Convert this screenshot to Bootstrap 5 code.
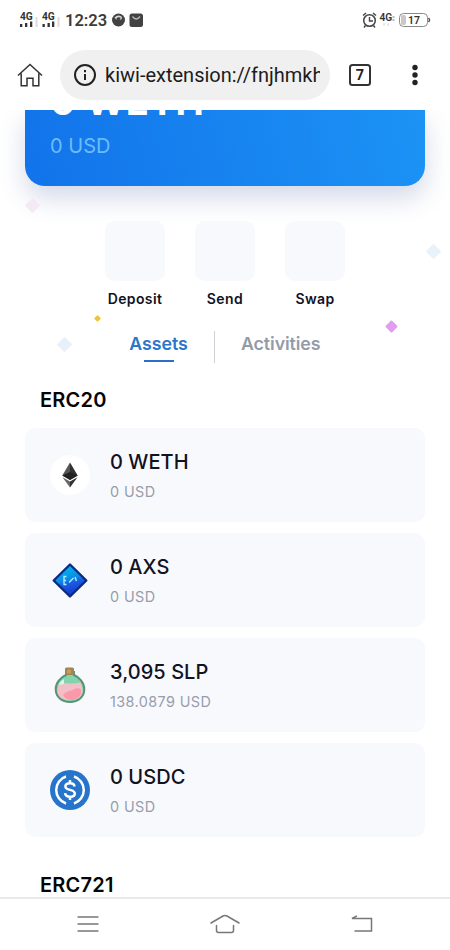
<!DOCTYPE html>
<html lang="en">
<head>
<meta charset="utf-8">
<meta name="viewport" content="width=device-width, initial-scale=1">
<title>Wallet</title>
<link href="https://cdn.jsdelivr.net/npm/bootstrap@5.3.0/dist/css/bootstrap.min.css" rel="stylesheet">
<style>
  body { height: 950px; font-family: Inter, "Liberation Sans", sans-serif; color: #11131f; background: #fff; }
  svg { display: block; flex: none; }
  .status-bar { height: 40px; padding: 0 19px 0 20px; font-family: Roboto, sans-serif; color: #3c3c3c; }
  .clock { font-size: 16.5px; line-height: 20px; font-weight: 600; letter-spacing: 0; padding-top: 1px; }
  .browser-bar { height: 70px; padding: 0 26px 0 15px; }
  .address { width: 270px; height: 50px; margin-left: 15px; padding: 0 10px 0 13px; background: #f0f0f0; font: 20px/50px Roboto, sans-serif; color: #1c1c1c; }
  .address-text { margin-left: 8px; }
  .page-view { height: 787px; padding: 0 25px; }
  .balance { height: 76px; padding-left: 25px; border-radius: 0 0 20px 20px; background: linear-gradient(75deg, #1273ea, #1c93f5); box-shadow: 0 12px 26px rgba(60, 80, 150, .22); }
  .balance-clip { height: 76px; }
  .balance-main { margin-top: -32px; font-size: 38px; line-height: 46px; font-weight: 700; letter-spacing: .6px; }
  .balance-sub { margin-top: 10px; font-size: 20px; line-height: 24px; color: #6cbcfb; }
  .actions { gap: 30px; margin-top: 35px; }
  .action { width: 60px; font-size: 14px; line-height: 20px; font-weight: 600; letter-spacing: .4px; }
  .action-tile { width: 60px; height: 60px; border-radius: 10px; background: #f8f9fd; margin-bottom: 8px; }
  .asset-tabs { height: 32px; margin-top: 22px; font-size: 17.8px; line-height: 25px; font-weight: 600; color: #939bab; letter-spacing: -.08px; }
  .tab-on { width: 85px; margin-left: 91px; color: #2b76cb; }
  .tab-line { width: 30px; height: 2px; margin-top: 4px; background: #2b6fc9; }
  .tab-off { margin-left: 26px; }
  .divider { width: 1px; height: 32px; margin-left: 13px; background: #cfd1d7; }
  .group-title { padding-left: 15px; font-size: 20px; line-height: 24px; font-weight: 600; color: #050505; letter-spacing: .2px; }
  .first-title { margin-top: 25px; }
  .asset { height: 94px; padding: 0 25px; border-radius: 10px; background: #f8f9fd; margin-bottom: 11px; }
  .asset-name { font-size: 20px; line-height: 26px; font-weight: 500; letter-spacing: .05px; }
  .asset-usd { margin-top: 7px; font-size: 14.4px; line-height: 20px; color: #989daa; letter-spacing: .4px; }
  .last-title { margin-top: 36px; }
  .confetti { width: 11px; height: 11px; transform: rotate(45deg); border-radius: 1px; position: absolute; }
  .c1 { left: 27px; top: 90px; background: #f4eaf6; }
  .c2 { left: 428px; top: 136px; background: #e8f2fa; }
  .c3 { left: 95px; top: 206px; width: 5px; height: 5px; background: #ecc53c; }
  .c4 { left: 387px; top: 212px; width: 9px; height: 9px; background: #e49cf0; }
  .c5 { left: 59px; top: 229px; background: #e8f1f9; }
  .system-nav { height: 53px; border-top: 2px solid #e9e9e9; background: #fff; padding: 0 77px 2px 77px; }
</style>
<script src="https://cdn.jsdelivr.net/npm/bootstrap@5.3.0/dist/js/bootstrap.bundle.min.js"></script>
</head>
<body class="d-flex flex-column overflow-hidden m-0">
<header>
  <div class="status-bar d-flex align-items-center justify-content-between">
    <div class="d-flex align-items-center">
      <svg width="45" height="20" viewBox="0 0 45 20" font-family="Roboto, sans-serif" font-size="10.2" font-weight="700" fill="#333">
        <text x="0" y="9.500">4G</text><text x="22" y="9.500">4G</text>
        <path d="M0 14h2.300v3H0zM5 13h2.300v4H5zM10 11.500h2.300v5.500H10zM22.500 14h2.300v3h-2.300zM27.500 13h2.300v4h-2.300zM32 11.500h2.300v5.500H32z"/>
        <path fill="#dcdcdc" d="M15.500 7h2v10h-2zM37.500 7h2v10h-2z"/>
      </svg>
      <span class="clock">12:23</span>
      <svg class="ms-1" width="33" height="16" viewBox="0 0 33 16">
        <circle cx="7.500" cy="8" r="6.500" fill="#424242"/><path d="M3.500 5.500Q7 2 10.500 4.500Q12 7.500 8.500 8Q11 5.500 8 5.300Q5 5 5.500 8" fill="#d9d9d9"/>
        <rect x="18.500" y="1.500" width="13.500" height="13.500" rx="2.500" fill="#424242"/><path d="M21.500 4.500Q25.200 9.500 29 4.500" fill="none" stroke="#bbb" stroke-width="1.300"/>
      </svg>
    </div>
    <svg width="70" height="20" viewBox="0 0 70 20" font-family="Roboto, sans-serif" fill="none" stroke="#444">
      <circle cx="8.500" cy="10.500" r="5.800" stroke-width="1.500"/><path d="M8.500 7v4h3.500M2 5.500 5 3M12 3l3 2.500M4.500 15.500 3 17.500M12.500 15.500l1.500 2" stroke-width="1.400"/>
      <text x="18.500" y="10.500" font-size="10.200" font-weight="600" fill="#333" stroke="none">4G</text>
      <path d="M31.500 7h2M31.500 10h2" stroke="#777"/><path d="M23 13v3M27 13v3M22 14h2M26 15h2" stroke="#ddd"/>
      <rect x="38.500" y="3.500" width="28" height="13" rx="4" stroke="#888"/><path d="M67.500 8q2 2 0 4" stroke="#555" stroke-width="1.500"/>
      <rect x="40" y="5" width="5" height="10" rx="2" fill="#c8c8c8" stroke="none"/>
      <text x="47" y="13.800" font-size="10.500" font-weight="600" fill="#333" stroke="none">17</text>
    </svg>
  </div>
  <div class="browser-bar d-flex align-items-center">
    <svg width="30" height="30" viewBox="0 0 30 30" fill="none" stroke="#333" stroke-width="1.500"><path d="M3 15.500 15 4.500 27 15.500M6.200 13.500V25.700H12V18.200h6v7.500h5.800V13.500"/></svg>
    <div class="address rounded-pill d-flex align-items-center">
      <svg width="24" height="24" viewBox="0 0 24 24"><circle cx="12" cy="12" r="10" fill="none" stroke="#222" stroke-width="2"/><path d="M11 11h2v6h-2zM11 7h2v2.200h-2z" fill="#222"/></svg>
      <span class="address-text text-nowrap overflow-hidden">kiwi-extension://fnjhmkh</span>
    </div>
    <svg class="ms-3" width="28" height="28" viewBox="0 0 28 28"><rect x="4" y="4" width="20" height="20" rx="2.500" fill="none" stroke="#333" stroke-width="2"/><text x="14" y="19.200" text-anchor="middle" font-family="Roboto, sans-serif" font-size="14.500" font-weight="700" fill="#222">7</text></svg>
    <svg class="ms-auto me-1" width="10" height="24" viewBox="0 0 10 24" fill="#222"><circle cx="5" cy="4.500" r="2.700"/><circle cx="5" cy="12" r="2.700"/><circle cx="5" cy="19.500" r="2.700"/></svg>
  </div>
</header>
<main class="page-view position-relative overflow-hidden">
  <section class="balance">
    <div class="balance-clip overflow-hidden">
      <div class="balance-main text-white">0 WETH</div>
      <div class="balance-sub">0 USD</div>
    </div>
  </section>
  <i class="confetti c1"></i><i class="confetti c2"></i><i class="confetti c3"></i><i class="confetti c4"></i><i class="confetti c5"></i>
  <section class="actions d-flex justify-content-center text-center">
    <div class="action"><div class="action-tile"></div>Deposit</div>
    <div class="action"><div class="action-tile"></div>Send</div>
    <div class="action"><div class="action-tile"></div>Swap</div>
  </section>
  <div class="asset-tabs d-flex">
    <div class="tab-on d-flex flex-column align-items-center">Assets<span class="tab-line"></span></div>
    <div class="divider"></div>
    <div class="tab-off">Activities</div>
  </div>
  <h2 class="group-title first-title mb-3">ERC20</h2>
  <div class="asset d-flex align-items-center">
    <svg width="40" height="40" viewBox="0 0 40 40"><circle cx="20" cy="20" r="20" fill="#fff"/><path fill="#555" d="M20 7.500 12.300 20.500 20 25z"/><path fill="#303030" d="M20 7.500 27.700 20.500 20 25z"/><path fill="#222" d="M20 17 12.300 20.500 20 25l7.700-4.500z"/><path fill="#666" d="M12.500 22.200 20 26.600V32.500z"/><path fill="#333" d="M27.500 22.200 20 26.600V32.500z"/></svg>
    <div class="ms-3 ps-1"><div class="asset-name">0 WETH</div><div class="asset-usd">0 USD</div></div>
  </div>
  <div class="asset d-flex align-items-center">
    <svg width="40" height="40" viewBox="0 0 40 40"><defs><linearGradient id="axs" x1=".2" y1="0" x2=".5" y2="1"><stop offset=".1" stop-color="#03b6ea"/><stop offset=".5" stop-color="#0a8be6"/><stop offset=".6" stop-color="#1b5fe0"/><stop offset="1" stop-color="#1730cf"/></linearGradient></defs><path d="M20 4.500 36.300 20.500 20 36.500 3.700 20.500z" fill="url(#axs)" stroke="#0b2a84" stroke-width="2.400" stroke-linejoin="round"/><path d="M16.500 16.500H14V24.500h2.500M14.500 20.500h1.500M19 22.500l4.500-4.500M25 17l1.500 4" fill="none" stroke="#a8ecff" stroke-width="1.400"/></svg>
    <div class="ms-3 ps-1"><div class="asset-name">0 AXS</div><div class="asset-usd">0 USD</div></div>
  </div>
  <div class="asset d-flex align-items-center">
    <svg width="40" height="40" viewBox="0 0 40 40"><path d="M16 7h8v3C29 12 34.300 17.500 34.300 24C34.300 32 28 37 20 37S5.700 32 5.700 24C5.700 17.500 11 12 16 10z" fill="#83d3ae" stroke="#5a9276" stroke-width="2"/><path d="M9.500 17.500Q20 19.500 30.500 17.500Q35.500 28 29 33Q20 37.500 11 33Q4.500 28 9.500 17.500z" fill="#f3bfc6"/><path d="M13 30Q18 25 22 25.500Q27 21.500 31 24.500Q32 31 26 34Q17 37 13 30z" fill="#fb98aa"/><path d="M9 20q1-4 5-6v5z" fill="#d9f4e9"/><rect x="15" y="2.500" width="9" height="7.500" rx="1.500" fill="#a4844e"/><path d="M17 4.500h4v4h-4z" fill="#bf9c62"/></svg>
    <div class="ms-3 ps-1"><div class="asset-name">3,095 SLP</div><div class="asset-usd">138.0879 USD</div></div>
  </div>
  <div class="asset d-flex align-items-center">
    <svg width="40" height="40" viewBox="0 0 40 40"><circle cx="20" cy="20" r="20" fill="#2775ca"/><g fill="none" stroke="#fff" stroke-width="2.500"><path d="M16 6.500A14.200 14.200 0 0 0 16 33.500M24 6.500A14.200 14.200 0 0 1 24 33.500"/><path d="M24.600 16.500C24.300 14 22.500 13.200 20 13.200C17.200 13.200 15.400 14.400 15.400 16.500C15.400 21.200 24.800 18.500 24.800 23.500C24.800 25.700 22.800 26.800 20 26.800C17.200 26.800 15.300 25.700 15.100 23.200M20 10v3.200M20 26.800V30"/></g></svg>
    <div class="ms-3 ps-1"><div class="asset-name">0 USDC</div><div class="asset-usd">0 USD</div></div>
  </div>
  <h2 class="group-title last-title">ERC721</h2>
</main>
<nav class="system-nav d-flex justify-content-between align-items-center">
  <svg width="22" height="18" viewBox="0 0 22 18" stroke="#777" stroke-width="1.500"><path d="M.5 2h21M.5 9h21M.5 16h21"/></svg>
  <svg width="30" height="22" viewBox="0 0 30 22" fill="none" stroke="#777" stroke-width="1.500" stroke-linecap="round"><path d="M1 10 13 3Q15 2 17 3L29 10M6.500 12.500v5Q6.500 19.500 8.500 19.500h13Q23.500 19.500 23.500 17.500v-5"/></svg>
  <svg width="22" height="18" viewBox="0 0 22 18" fill="none" stroke="#777" stroke-width="1.500"><path d="M6 .8 1 3.500H20.500V16H3.500"/></svg>
</nav>
</body>
</html>
